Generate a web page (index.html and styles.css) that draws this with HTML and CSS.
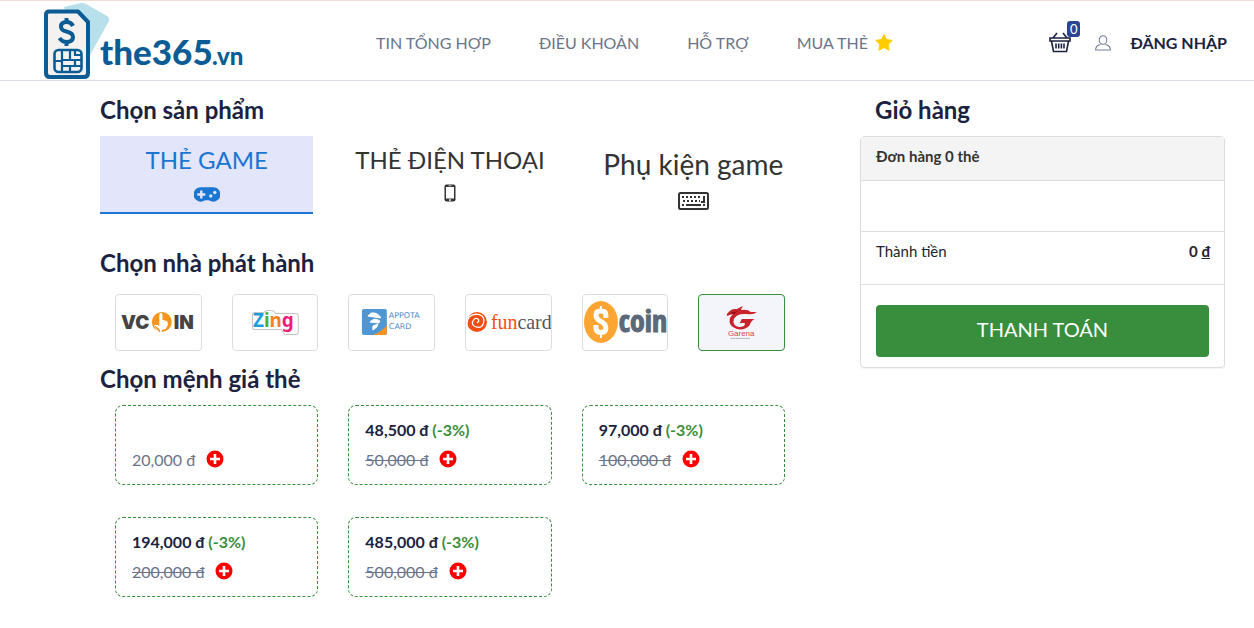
FILE: index.html
```html
<!DOCTYPE html>
<html lang="vi">
<head>
  <meta charset="UTF-8">
  <meta name="viewport" content="width=device-width, initial-scale=1.0">
  <title>the365.vn</title>
  <link rel="stylesheet" href="styles.css">
</head>
<body>

  <!-- Header -->
  <header class="header">
    <a class="logo" href="#" aria-label="the365.vn">
      <svg width="200" height="78" viewBox="0 0 200 78">
        <path d="M20 5 L37 1 Q40 1 42 2 L63 14 Q66 16 65 19 L46 53 L30 40 Z" fill="#b8e0ea"/>
        <path d="M5 9.500 H34 L44 20 V71 Q44 75 40 75 H6 Q2 75 2 71 V13 Q2 9.500 5 9.500 Z" fill="#f3f2f1" stroke="#0b5c95" stroke-width="4" stroke-linejoin="round"/>
        <path d="M29 24 Q27 20 22.500 20 Q17 20 17 24.500 Q17 28.500 22.500 29.500 Q29 31 29 35 Q29 40 22.500 40 Q18 40 15.500 36 M22.500 16 V20 M22.500 40 V44" fill="none" stroke="#0b5c95" stroke-width="4"/>
        <rect x="10.500" y="48" width="27" height="22" rx="4" fill="#f3f2f1" stroke="#0b5c95" stroke-width="2.600"/>
        <path d="M18 48 V70 M10 59 H18 M18 58 H37 M26 48 V58 M31 58 V64 M26 64 V70 M18 64 H37 M31 48 V53 H37" fill="none" stroke="#0b5c95" stroke-width="2.200"/>
        <text class="logo-name" x="56" y="63">the365</text>
        <text class="logo-tld" x="168" y="63">.vn</text>
      </svg>
    </a>

    <nav class="nav">
      <a href="#">TIN TỔNG HỢP</a>
      <a href="#">ĐIỀU KHOẢN</a>
      <a href="#">HỖ TRỢ</a>
      <a href="#">MUA THẺ
        <svg width="18" height="17" viewBox="0 0 18 17"><path d="M9 .5 L11.500 5.600 L17.200 6.400 L13.100 10.400 L14.100 16.200 L9 13.500 L3.900 16.200 L4.900 10.400 L.8 6.400 L6.500 5.600 Z" fill="#fc0" stroke="#fc0" stroke-linejoin="round"/></svg>
      </a>
    </nav>

    <div class="account">
      <a class="basket" href="#" aria-label="Giỏ hàng">
        <svg width="22" height="21" viewBox="0 0 22 21" fill="none" stroke="#1b2240" stroke-width="1.600">
          <path d="M1 6 H21 V9 H1 Z M2.500 9 L4.500 19.500 H17.500 L19.500 9 M4 6 L8 1 M18 6 L14 1"/>
          <path d="M7 11.500 V16.500 M9.700 11.500 V16.500 M12.400 11.500 V16.500 M15 11.500 V16.500"/>
        </svg>
        <span class="badge">0</span>
      </a>
      <a class="login" href="#">
        <svg width="16" height="16" viewBox="0 0 16 16" fill="none" stroke="#777c98" stroke-width="1.100">
          <ellipse cx="8" cy="5" rx="3.800" ry="4.300"/>
          <path d="M5.500 9.500 Q.6 10.500 .6 15 H15.400 Q15.400 10.500 10.500 9.500"/>
        </svg>
        <span>ĐĂNG NHẬP</span>
      </a>
    </div>
  </header>

  <main class="main">
    <div class="shop">
      <!-- Product type -->
      <section>
        <h2 class="title">Chọn sản phẩm</h2>
        <div class="tabs">
          <button class="tab active" type="button">
            <span>THẺ GAME</span>
            <svg width="26" height="18" viewBox="0 -3 26 18">
              <path d="M7.500 .3 H18.500 A7.200 7.200 0 1 1 15 13.300 H11 A7.200 7.200 0 1 1 7.500 .3 Z" fill="#1976d2"/>
              <path d="M7.300 3.500 V11.500 M3.300 7.500 H11.300" stroke="#e3e5fb" stroke-width="2.400"/>
              <circle cx="16.800" cy="9" r="1.700" fill="#e3e5fb"/>
              <circle cx="20.800" cy="5.500" r="1.700" fill="#e3e5fb"/>
            </svg>
          </button>
          <button class="tab" type="button">
            <span>THẺ ĐIỆN THOẠI</span>
            <svg width="12" height="18" viewBox="0 0 12 18">
              <rect x=".5" y=".5" width="11" height="17" rx="2" fill="#333"/>
              <rect x="2" y="3" width="8" height="11.500" fill="#fff"/>
              <path d="M4.500 1.800 H7.500" stroke="#fff" stroke-width=".7"/>
              <circle cx="6" cy="16" r=".9" fill="#fff"/>
            </svg>
          </button>
          <button class="tab large" type="button">
            <span>Phụ kiện game</span>
            <svg width="31" height="18" viewBox="0 0 31 18" fill="none" stroke="#333">
              <rect x="1" y="1" width="29" height="16" rx="1.500" stroke-width="2"/>
              <path d="M4 5 H24 M5 9 H22" stroke-width="2" stroke-dasharray="2 2"/>
              <path d="M4 13 H6 M8 13 H23 M25 13 H27 M26 4 V10 H23" stroke-width="2"/>
            </svg>
          </button>
        </div>
      </section>

      <!-- Publisher -->
      <section>
        <h2 class="title">Chọn nhà phát hành</h2>
        <div class="publishers">
          <button class="publisher" type="button" aria-label="Vcoin">
            <svg width="85" height="55" viewBox="0 0 85 55">
              <text class="brand-vcoin" x="5" y="34">VC</text>
              <circle cx="46" cy="27" r="10" fill="#f7941d"/>
              <path d="M43.500 20 Q43.500 18 45 18 Q46.700 18 46.700 20 V25 L51 26 Q52.500 27 52 30 L50 34 L46 35 V38 H43 L38 31 Q40 28.500 43.500 31 Z" fill="#fff"/>
              <path d="M39 31 L44 37 L43 34 Z" fill="#f7941d" stroke="#f7941d"/>
              <text class="brand-vcoin" x="58" y="34">IN</text>
            </svg>
          </button>
          <button class="publisher" type="button" aria-label="Zing">
            <svg width="85" height="55" viewBox="0 0 85 55">
              <path d="M22 20 H31 L35 18 H39 L42 21 H63 V37 H53 L50 32 H22 Z" fill="#c4c4c4" stroke="#c4c4c4" stroke-width="6" stroke-linejoin="round"/>
              <path d="M22 20 H31 L35 18 H39 L42 21 H63 V37 H53 L50 32 H22 Z" fill="#fff" stroke="#fff" stroke-width="4" stroke-linejoin="round"/>
              <text class="brand-zing" x="20" y="32"><tspan fill="#1a9fdc">Z</tspan><tspan fill="#4caf3a">i</tspan><tspan fill="#f58220">n</tspan><tspan fill="#ec1e79">g</tspan></text>
            </svg>
          </button>
          <button class="publisher" type="button" aria-label="Appota Card">
            <svg width="85" height="55" viewBox="0 0 85 55">
              <rect x="13" y="14" width="25" height="26" rx="2" fill="#4f97d3"/>
              <path d="M38 30 V38 Q38 40 36 40 H24 Q33 37 38 30 Z" fill="#f7941d"/>
              <path d="M19 21 L22 18 Q29 17 32 23 Z M21 27 Q26 22 31 26 L30 28 Z M24 31 L29 29 L28 32 L24 35 Z" fill="#fff" stroke="#fff"/>
              <text class="brand-appota" x="40" y="23">APPOTA</text>
              <text class="brand-appota" x="40" y="34">CARD</text>
            </svg>
          </button>
          <button class="publisher" type="button" aria-label="Funcard">
            <svg width="85" height="55" viewBox="0 0 85 55">
              <circle cx="11" cy="27" r="10" fill="#f04e13"/>
              <path d="M1 31 Q0 20 10 19 Q18 19 18 26 Q17 34 10 32 Q5 30 7 26 Q9 22 12 24 Q14 26 11 28" fill="none" stroke="#fff" stroke-width="1.300"/>
              <text class="brand-funcard" x="25" y="34"><tspan fill="#f04e13">fun</tspan><tspan fill="#555">card</tspan></text>
            </svg>
          </button>
          <button class="publisher" type="button" aria-label="Scoin">
            <svg width="85" height="55" viewBox="0 0 85 55">
              <ellipse cx="18" cy="27" rx="17" ry="21" fill="#fda532"/>
              <path d="M23 23 V20 Q23 16 18 16 Q13 16 13 20 Q13 24 18 26.500 Q23 29 23 33 Q23 37.500 18 37.500 Q13 37.500 13 33 V30" fill="none" stroke="#fff" stroke-width="5"/>
              <path d="M18 11 V16 M18 38 V43" stroke="#fff" stroke-width="2"/>
              <text class="brand-scoin" x="36" y="37">coin</text>
            </svg>
          </button>
          <button class="publisher selected" type="button" aria-label="Garena">
            <svg width="85" height="55" viewBox="0 0 85 55">
              <path d="M28 19 Q32 13 38 14 L44 11 L42 15 Q49 14 52 17 L58 17 Q55 20 48 19 Q38 18 35 24 Q33 31 40 32 Q47 32 46 28 H41 L43 24 H56 Q52 26 51 30 Q46 36 38 34 Q29 31 31 23 L34 19 L28 21 Z" fill="#c8232c"/>
              <path d="M31 18 L39 16 L35 19 Z" fill="#7d1218"/>
              <text class="brand-garena" x="29" y="41">Garena</text>
              <path d="M32 43.500 H51" stroke="#888" stroke-width=".7" stroke-dasharray="2 .5"/>
            </svg>
          </button>
        </div>
      </section>

      <!-- Card values -->
      <section>
        <h2 class="title">Chọn mệnh giá thẻ</h2>
        <div class="cards">
          <div class="card">
            <p class="price"></p>
            <p class="value"><span>20,000 đ</span> <button class="add" type="button" aria-label="Thêm thẻ 20,000 đ"><svg width="18" height="18" viewBox="0 0 18 18"><circle cx="9" cy="9" r="8.500" fill="red"/><path d="M9 4 V14 M4 9 H14" stroke="#fff" stroke-width="2.600"/></svg></button></p>
          </div>
          <div class="card">
            <p class="price">48,500 đ <span class="discount">(-3%)</span></p>
            <p class="value"><del>50,000 đ</del> <button class="add" type="button" aria-label="Thêm thẻ 50,000 đ"><svg width="18" height="18" viewBox="0 0 18 18"><circle cx="9" cy="9" r="8.500" fill="red"/><path d="M9 4 V14 M4 9 H14" stroke="#fff" stroke-width="2.600"/></svg></button></p>
          </div>
          <div class="card">
            <p class="price">97,000 đ <span class="discount">(-3%)</span></p>
            <p class="value"><del>100,000 đ</del> <button class="add" type="button" aria-label="Thêm thẻ 100,000 đ"><svg width="18" height="18" viewBox="0 0 18 18"><circle cx="9" cy="9" r="8.500" fill="red"/><path d="M9 4 V14 M4 9 H14" stroke="#fff" stroke-width="2.600"/></svg></button></p>
          </div>
          <div class="card">
            <p class="price">194,000 đ <span class="discount">(-3%)</span></p>
            <p class="value"><del>200,000 đ</del> <button class="add" type="button" aria-label="Thêm thẻ 200,000 đ"><svg width="18" height="18" viewBox="0 0 18 18"><circle cx="9" cy="9" r="8.500" fill="red"/><path d="M9 4 V14 M4 9 H14" stroke="#fff" stroke-width="2.600"/></svg></button></p>
          </div>
          <div class="card">
            <p class="price">485,000 đ <span class="discount">(-3%)</span></p>
            <p class="value"><del>500,000 đ</del> <button class="add" type="button" aria-label="Thêm thẻ 500,000 đ"><svg width="18" height="18" viewBox="0 0 18 18"><circle cx="9" cy="9" r="8.500" fill="red"/><path d="M9 4 V14 M4 9 H14" stroke="#fff" stroke-width="2.600"/></svg></button></p>
          </div>
        </div>
      </section>
    </div>

    <!-- Cart -->
    <aside class="cart">
      <h2 class="title">Giỏ hàng</h2>
      <div class="cart-box">
        <div class="cart-head">Đơn hàng 0 thẻ</div>
        <div class="cart-items"></div>
        <div class="cart-total">
          <span>Thành tiền</span>
          <strong>0 <u>đ</u></strong>
        </div>
        <div class="cart-pay">
          <button class="pay-btn" type="button">THANH TOÁN</button>
        </div>
      </div>
    </aside>
  </main>

</body>
</html>
```
FILE: styles.css
```css
/* General Page Styles */
* {
  box-sizing: border-box;
}

body {
  margin: 0;
  font-family: Lato, "Liberation Sans", sans-serif;
  font-size: 16px;
  line-height: 24px;
  color: #212529;
  background-color: #fff;
}

a {
  color: inherit;
  text-decoration: none;
}

button {
  font-family: inherit;
  cursor: pointer;
}

svg {
  display: block;
}

p {
  margin: 0;
}

/* Header */
.header {
  display: flex;
  align-items: center;
  height: 81px;
  padding: 0 27px 0 44px;
  border-top: 1px solid #f5dcd6;
  border-bottom: 1px solid #d9dee8;
}

.logo-name,
.logo-tld {
  font-weight: 900;
  font-size: 35px;
  fill: #0b5c95;
}

.logo-tld {
  font-size: 24px;
}

.nav {
  display: flex;
  gap: 48px;
  margin-left: 132px;
  padding-top: 4px;
  color: #6b7489;
}

.nav a {
  display: flex;
  align-items: center;
  gap: 7px;
}

.account {
  display: flex;
  align-items: center;
  gap: 24px;
  margin-left: auto;
  padding-top: 4px;
  color: #1b2240;
}

.basket {
  position: relative;
}

.badge {
  position: absolute;
  top: -11px;
  right: -9px;
  padding: 0 3px;
  border-radius: 3px;
  background-color: #2a4593;
  color: #fff;
  font-size: 13px;
  line-height: 16px;
}

.login {
  display: flex;
  align-items: center;
  gap: 19px;
  font-weight: 700;
}

/* Main Layout */
.main {
  display: grid;
  grid-template-columns: 700fr 365fr;
  gap: 60px;
  align-items: start;
  padding: 13px 29px 30px 100px;
}

.title {
  margin: 0 0 10px;
  font-size: 24px;
  font-weight: 700;
  line-height: 32px;
  color: #1b2240;
}

/* Product Tabs */
.tabs {
  display: grid;
  grid-template-columns: repeat(3, 1fr);
  gap: 30px;
  margin-bottom: 33px;
}

.tab {
  display: flex;
  flex-direction: column;
  align-items: center;
  gap: 8px;
  height: 78px;
  padding: 8px 0 0;
  border: 0;
  border-bottom: 2px solid transparent;
  background: none;
  color: #333;
  font-size: 24px;
  line-height: 32px;
  white-space: nowrap;
}

.tab.active {
  background-color: #e3e5fb;
  border-color: #1976d2;
  color: #1976d2;
}

.tab.large {
  font-size: 28px;
  line-height: 40px;
}

/* Publishers */
.publishers {
  display: grid;
  grid-template-columns: repeat(6, 1fr);
  gap: 30px;
  margin-bottom: 12px;
  padding: 5px 15px 0;
}

.publisher {
  display: flex;
  justify-content: center;
  height: 57px;
  padding: 0;
  overflow: hidden;
  border: 1px solid #ddd;
  border-radius: 4px;
  background-color: #fff;
}

.publisher.selected {
  border-color: #388e3c;
  background-color: #f4f5fa;
}

.brand-vcoin {
  font: 900 19px Inter, sans-serif;
  fill: #444;
}

.brand-zing {
  font: 700 19px "Noto Sans", sans-serif;
}

.brand-appota {
  font: 8px "DejaVu Sans", sans-serif;
  fill: #4f8cc9;
}

.brand-funcard {
  font: 20px "Liberation Serif", serif;
}

.brand-scoin {
  font: 900 30px "Noto Sans ExtraCondensed", "Open Sans Condensed", "Roboto Condensed", "DejaVu Sans Condensed", sans-serif;
  fill: #5c6878;
  stroke: #5c6878;
  stroke-width: 1px;
}

.brand-garena {
  font: 8px "Liberation Sans", sans-serif;
  fill: #d9454c;
}

/* Card Values */
.cards {
  display: grid;
  grid-template-columns: repeat(3, 1fr);
  gap: 32px 30px;
  padding: 0 15px;
}

.card {
  height: 80px;
  padding: 12px 16px;
  border: 1px dashed #388e3c;
  border-radius: 8px;
}

.price {
  height: 30px;
  font-weight: 700;
  color: #1b2240;
}

.discount {
  color: #388e3c;
}

.value {
  display: flex;
  gap: 11px;
  color: #6b7489;
}

.add {
  height: 22px;
  padding: 0;
  border: 0;
  background: none;
}

/* Cart */
.cart .title {
  padding-left: 15px;
}

.cart-box {
  border: 1px solid #ddd;
  border-radius: 4px;
  box-shadow: 0 1px 1px rgba(0, 0, 0, 0.05);
  font-size: 15px;
  line-height: 20px;
}

.cart-head {
  padding: 9px 15px 14px;
  background-color: #f4f4f4;
  color: #333;
  font-weight: 700;
}

.cart-items {
  height: 51px;
  border-top: 1px solid #ddd;
}

.cart-total {
  display: flex;
  justify-content: space-between;
  height: 53px;
  padding: 9px 14px 0 15px;
  border-top: 1px solid #ddd;
}

.cart-pay {
  padding: 20px 15px 10px;
  border-top: 1px solid #ddd;
}

.pay-btn {
  width: 100%;
  height: 52px;
  padding: 0 0 5px;
  border: 0;
  border-radius: 4px;
  background-color: #388e3c;
  color: #fff;
  font-size: 20px;
}
```
